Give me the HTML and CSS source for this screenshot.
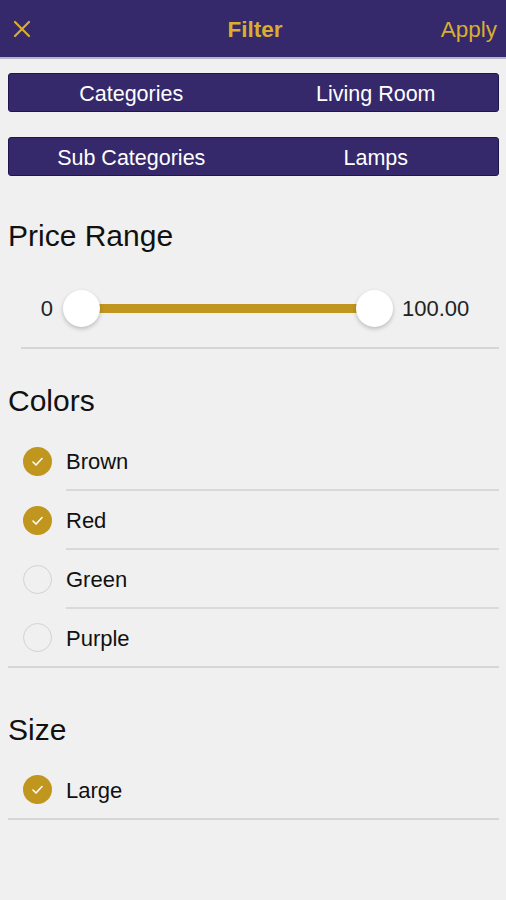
FILE: index.html
```html
<!DOCTYPE html>
<html lang="en">
<head>
  <meta charset="UTF-8" />
  <meta name="viewport" content="width=device-width, initial-scale=1.0" />
  <title>Filter</title>
  <link rel="stylesheet" href="styles.css">
</head>
<body>
  <header class="topbar">
    <span class="close">
      <svg width="18" height="18" viewBox="0 0 18 18"><path d="M2 2 L16 16 M16 2 L2 16" stroke="#d9ae2f" stroke-width="2.2" stroke-linecap="round"/></svg>
    </span>
    <span class="title">Filter</span>
    <span class="apply">Apply</span>
  </header>

  <main class="content">
    <div class="pill">
      <span>Categories</span>
      <span>Living Room</span>
    </div>
    <div class="pill">
      <span>Sub Categories</span>
      <span>Lamps</span>
    </div>

    <h2 class="price-title">Price Range</h2>
    <div class="range">
      <span class="range-min">0</span>
      <div class="track">
        <span class="thumb"></span>
        <span class="bar"></span>
        <span class="thumb"></span>
      </div>
      <span class="range-max">100.00</span>
    </div>

    <h2 class="colors-title">Colors</h2>
    <ul class="options">
      <li class="checked"><span class="box"></span><span class="label">Brown</span></li>
      <li class="checked"><span class="box"></span><span class="label">Red</span></li>
      <li><span class="box"></span><span class="label">Green</span></li>
      <li class="last"><span class="box"></span><span class="label">Purple</span></li>
    </ul>

    <h2 class="size-title">Size</h2>
    <ul class="options">
      <li class="checked last"><span class="box"></span><span class="label">Large</span></li>
    </ul>
  </main>
</body>
</html>
```

FILE: styles.css
```css
* {
  font-family: 'Liberation Sans', Arial, sans-serif;
  box-sizing: border-box;
}
body {
  margin: 0;
  background: #f0f0f0;
  color: #111;
}
.topbar {
  height: 59px;
  background: #35296b;
  border-bottom: 2px solid #b9b5c9;
  display: flex;
  align-items: center;
  justify-content: space-between;
  padding: 3px 9px 0 13px;
  color: #d9ae2f;
}
.close {
  width: 70px;
  display: flex;
  padding-bottom: 3px;
}
.title {
  font-size: 22.5px;
  font-weight: bold;
}
.apply {
  width: 70px;
  text-align: right;
  font-size: 22.5px;
}
.content {
  padding: 0 7px 0 8px;
}
.pill {
  margin-top: 14px;
  height: 39px;
  padding-top: 3px;
  background: #35296b;
  border: 1px solid #1f1650;
  border-radius: 3px;
  display: flex;
  align-items: center;
  color: #fff;
  font-size: 21.5px;
}
.pill + .pill {
  margin-top: 25px;
}
.pill span {
  flex: 1;
  text-align: center;
}
h2 {
  font-size: 30px;
  font-weight: normal;
  margin: 0;
  line-height: 34px;
}
.price-title {
  margin-top: 43px;
}
.range {
  margin-left: 13px;
  height: 96px;
  padding-top: 17px;
  display: flex;
  align-items: center;
  border-bottom: 2px solid #d6d6d6;
  font-size: 22px;
  color: #222;
}
.range-min {
  width: 32px;
  text-align: right;
}
.track {
  width: 330px;
  display: flex;
  align-items: center;
  margin: 0 9px 0 10px;
}
.thumb {
  width: 37px;
  height: 37px;
  border-radius: 50%;
  background: #fff;
  box-shadow: 0 2px 4px rgba(0,0,0,0.22);
  position: relative;
}
.bar {
  flex: 1;
  height: 9px;
  background: #c0961f;
  margin: 0 -2px;
}
.colors-title {
  margin-top: 35px;
}
.options {
  list-style: none;
  margin: 14px 0 0;
  padding: 0;
}
.options li {
  display: flex;
  align-items: center;
  height: 59px;
  padding-left: 15px;
  font-size: 22px;
}
.box {
  width: 29px;
  height: 29px;
  border-radius: 50%;
  border: 1.5px solid #d2d2d2;
  margin-right: 14px;
  flex-shrink: 0;
}
.checked .box {
  border: none;
  background: #c0961f url("data:image/svg+xml,%3Csvg xmlns='http://www.w3.org/2000/svg' width='29' height='29'%3E%3Cpath d='M10 15 L13 18 L19 11.5' fill='none' stroke='white' stroke-width='1.6' stroke-linecap='round' stroke-linejoin='round'/%3E%3C/svg%3E") center no-repeat;
}
.label {
  flex: 1;
  align-self: stretch;
  display: flex;
  align-items: center;
  border-bottom: 2px solid #d9d9d9;
  padding-top: 2px;
}
.options li.last {
  padding-left: 0;
  border-bottom: 2px solid #d6d6d6;
}
.options li.last .box {
  margin-left: 15px;
}
.options li.last .label {
  border-bottom: none;
}
.size-title {
  margin-top: 45px;
}
```
